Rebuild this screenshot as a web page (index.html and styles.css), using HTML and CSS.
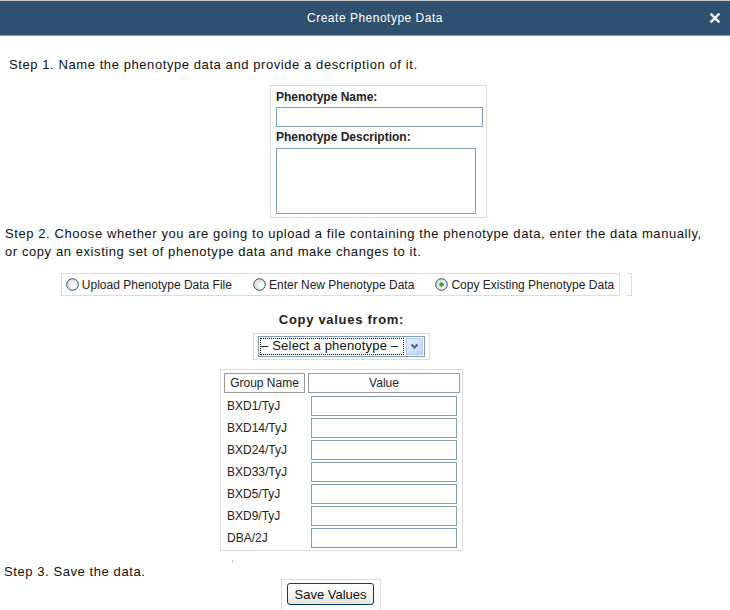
FILE: index.html
```html
<!DOCTYPE html>
<html>
<head>
<meta charset="utf-8">
<title>Create Phenotype Data</title>
<link rel="stylesheet" href="styles.css">
</head>
<body>
<div class="header">
  <span class="title">Create Phenotype Data</span>
  <svg class="close" width="10" height="10" viewBox="0 0 10 10"><path d="M1.5 1.5 L8.5 8.5 M8.5 1.5 L1.5 8.5" stroke="#fff" stroke-width="2.4" stroke-linecap="square"/></svg>
</div>

<p class="step step1">Step 1. Name the phenotype data and provide a description of it.</p>

<div class="namebox">
  <div class="lbl">Phenotype Name:</div>
  <div class="txt name"></div>
  <div class="lbl lbl2">Phenotype Description:</div>
  <div class="txt desc"></div>
</div>

<p class="step step2">Step 2. Choose whether you are going to upload a file containing the phenotype data, enter the data manually, or copy an existing set of phenotype data and make changes to it.</p>

<div class="center">
  <div class="radiorow">
    <div class="radios">
      <span class="opt"><svg class="radio" width="13" height="13" viewBox="0 0 13 13"><defs><radialGradient id="rg" cx="0.65" cy="0.65" r="0.7"><stop offset="0" stop-color="#ffffff"/><stop offset="1" stop-color="#dcdcd6"/></radialGradient></defs><circle cx="6.5" cy="6.5" r="5.8" fill="url(#rg)" stroke="#1c5180" stroke-width="1"/></svg>Upload Phenotype Data File</span>
      <span class="opt"><svg class="radio" width="13" height="13" viewBox="0 0 13 13"><circle cx="6.5" cy="6.5" r="5.8" fill="url(#rg)" stroke="#1c5180" stroke-width="1"/></svg>Enter New Phenotype Data</span>
      <span class="opt"><svg class="radio" width="13" height="13" viewBox="0 0 13 13"><circle cx="6.5" cy="6.5" r="5.8" fill="url(#rg)" stroke="#1c5180" stroke-width="1"/><circle cx="6.5" cy="6.5" r="2.3" fill="#3ba83b"/></svg>Copy Existing Phenotype Data</span>
    </div>
    <div class="bracket"></div>
  </div>

  <div class="copyfrom">Copy values from:</div>

  <div class="selbox">
    <div class="select">
      <span class="seltext">– Select a phenotype –</span>
      <span class="selbtn"><svg width="9" height="7" viewBox="0 0 9 7"><path d="M1.5 1.5 L4.5 4.5 L7.5 1.5" stroke="#4d6185" stroke-width="2" fill="none"/></svg></span>
    </div>
  </div>

  <div class="valtable">
    <div class="th">Group Name</div>
    <div class="th">Value</div>
    <div class="gn">BXD1/TyJ</div><div class="vc"><div class="vin"></div></div>
    <div class="gn">BXD14/TyJ</div><div class="vc"><div class="vin"></div></div>
    <div class="gn">BXD24/TyJ</div><div class="vc"><div class="vin"></div></div>
    <div class="gn">BXD33/TyJ</div><div class="vc"><div class="vin"></div></div>
    <div class="gn">BXD5/TyJ</div><div class="vc"><div class="vin"></div></div>
    <div class="gn">BXD9/TyJ</div><div class="vc"><div class="vin"></div></div>
    <div class="gn">DBA/2J</div><div class="vc"><div class="vin"></div></div>
  </div>
  <div class="tick"></div>
</div>

<p class="step step3">Step 3. Save the data.</p>

<div class="center">
  <div class="savebox"><button class="savebtn">Save Values</button></div>
</div>
</body>
</html>
```

FILE: styles.css
```css
html, body {
  margin: 0;
  padding: 0;
  background: #fff;
  font-family: "Liberation Sans", Arial, sans-serif;
  color: #111;
  overflow: hidden;
}

.header {
  height: 34px;
  background: #30506f;
  border-top: 1px solid #c8c8c8;
  border-bottom: 1px solid #8a98a8;
  display: flex;
  align-items: center;
  justify-content: center;
  position: relative;
}

.title {
  color: #fff;
  font-size: 12px;
  letter-spacing: 0.5px;
  margin-left: 20px;
}

.close {
  position: absolute;
  right: 10px;
  top: 12px;
}

.step {
  margin: 0;
  font-size: 13px;
  line-height: 18px;
  letter-spacing: 0.58px;
  color: #111;
}

.step1 {
  margin: 20px 0 0 9px;
}

.namebox {
  margin: 11px 0 0 270px;
  width: 205px;
  border: 1px solid #dcdcdc;
  padding: 3px 5px 3px 5px;
}

.lbl {
  font-size: 12px;
  font-weight: bold;
  line-height: 14px;
  color: #222;
  margin-top: 1px;
}

.lbl2 {
  margin-top: 3px;
}

.txt {
  border: 1px solid #7f9db9;
  background: #fff;
  box-sizing: border-box;
}

.name {
  width: 207px;
  height: 20px;
  margin-top: 3px;
}

.desc {
  width: 200px;
  height: 66px;
  margin-top: 4px;
}

.step2 {
  margin: 7px 20px 0 5px;
}

.center {
  width: 683px;
  display: flex;
  flex-direction: column;
  align-items: center;
}

.radiorow {
  display: flex;
  align-items: stretch;
  margin-top: 12px;
  margin-left: 10px;
}

.radios {
  border: 1px solid #dcdcdc;
  height: 21px;
  display: flex;
  align-items: center;
  padding: 0 5px 0 4px;
  font-size: 12px;
  color: #222;
}

.opt {
  display: flex;
  align-items: center;
  margin-right: 21px;
}

.opt:last-child {
  margin-right: 0;
}

.radio {
  margin-right: 3px;
}

.bracket {
  width: 4px;
  margin-left: 7px;
  border: 1px solid #dcdcdc;
  border-left: none;
}

.copyfrom {
  font-size: 13px;
  font-weight: bold;
  letter-spacing: 0.7px;
  color: #222;
  margin-top: 16px;
  line-height: 15px;
}

.selbox {
  margin-top: 6px;
  border: 1px solid #dcdcdc;
  padding: 2px 4px 2px 4px;
}

.select {
  width: 165px;
  height: 19px;
  border: 1px solid #7f9db9;
  display: flex;
  align-items: stretch;
  background: #fff;
}

.seltext {
  flex: 1;
  font-size: 13px;
  line-height: 15px;
  letter-spacing: 0.2px;
  margin: 1px;
  padding: 0 1px;
  outline: 1px dotted #111;
  outline-offset: -1px;
  white-space: nowrap;
  color: #111;
}

.selbtn {
  width: 17px;
  margin: 1px;
  background: linear-gradient(135deg, #e6eefc 0%, #c1d3fb 100%);
  border: 1px solid #b9c9ef;
  box-sizing: border-box;
  display: flex;
  align-items: center;
  justify-content: center;
}

.valtable {
  margin-top: 9px;
  border: 1px solid #dcdcdc;
  display: grid;
  grid-template-columns: 81px 152px;
  column-gap: 3px;
  row-gap: 2px;
  padding: 3px 2px 2px 3px;
  font-size: 12px;
  color: #222;
}

.th {
  border: 1px solid #999;
  height: 20px;
  box-sizing: border-box;
  display: flex;
  align-items: center;
  justify-content: center;
  margin-bottom: 1px;
}

.gn {
  display: flex;
  align-items: center;
  padding-left: 3px;
  height: 20px;
}

.vc {
  height: 20px;
  padding-left: 3px;
}

.vin {
  width: 146px;
  height: 20px;
  box-sizing: border-box;
  border: 1px solid #7f9db9;
  background: #fff;
}

.tick {
  width: 1px;
  height: 3px;
  background: #ccc;
  margin: 9px 0 0 -219px;
}

.step3 {
  margin: 0 0 0 4px;
}

.savebox {
  margin-top: -2px;
  margin-left: -21px;
  border: 1px solid #dcdcdc;
  border-bottom: none;
  padding: 3px 6px 8px 5px;
}

.savebtn {
  font-family: "Liberation Sans", Arial, sans-serif;
  font-size: 13px;
  height: 22px;
  width: 87px;
  padding: 0;
  border: 1px solid #003c74;
  border-radius: 3px;
  background: linear-gradient(180deg, #ffffff 0%, #f4f4f0 60%, #e3e3db 100%);
  color: #111;
}
```
